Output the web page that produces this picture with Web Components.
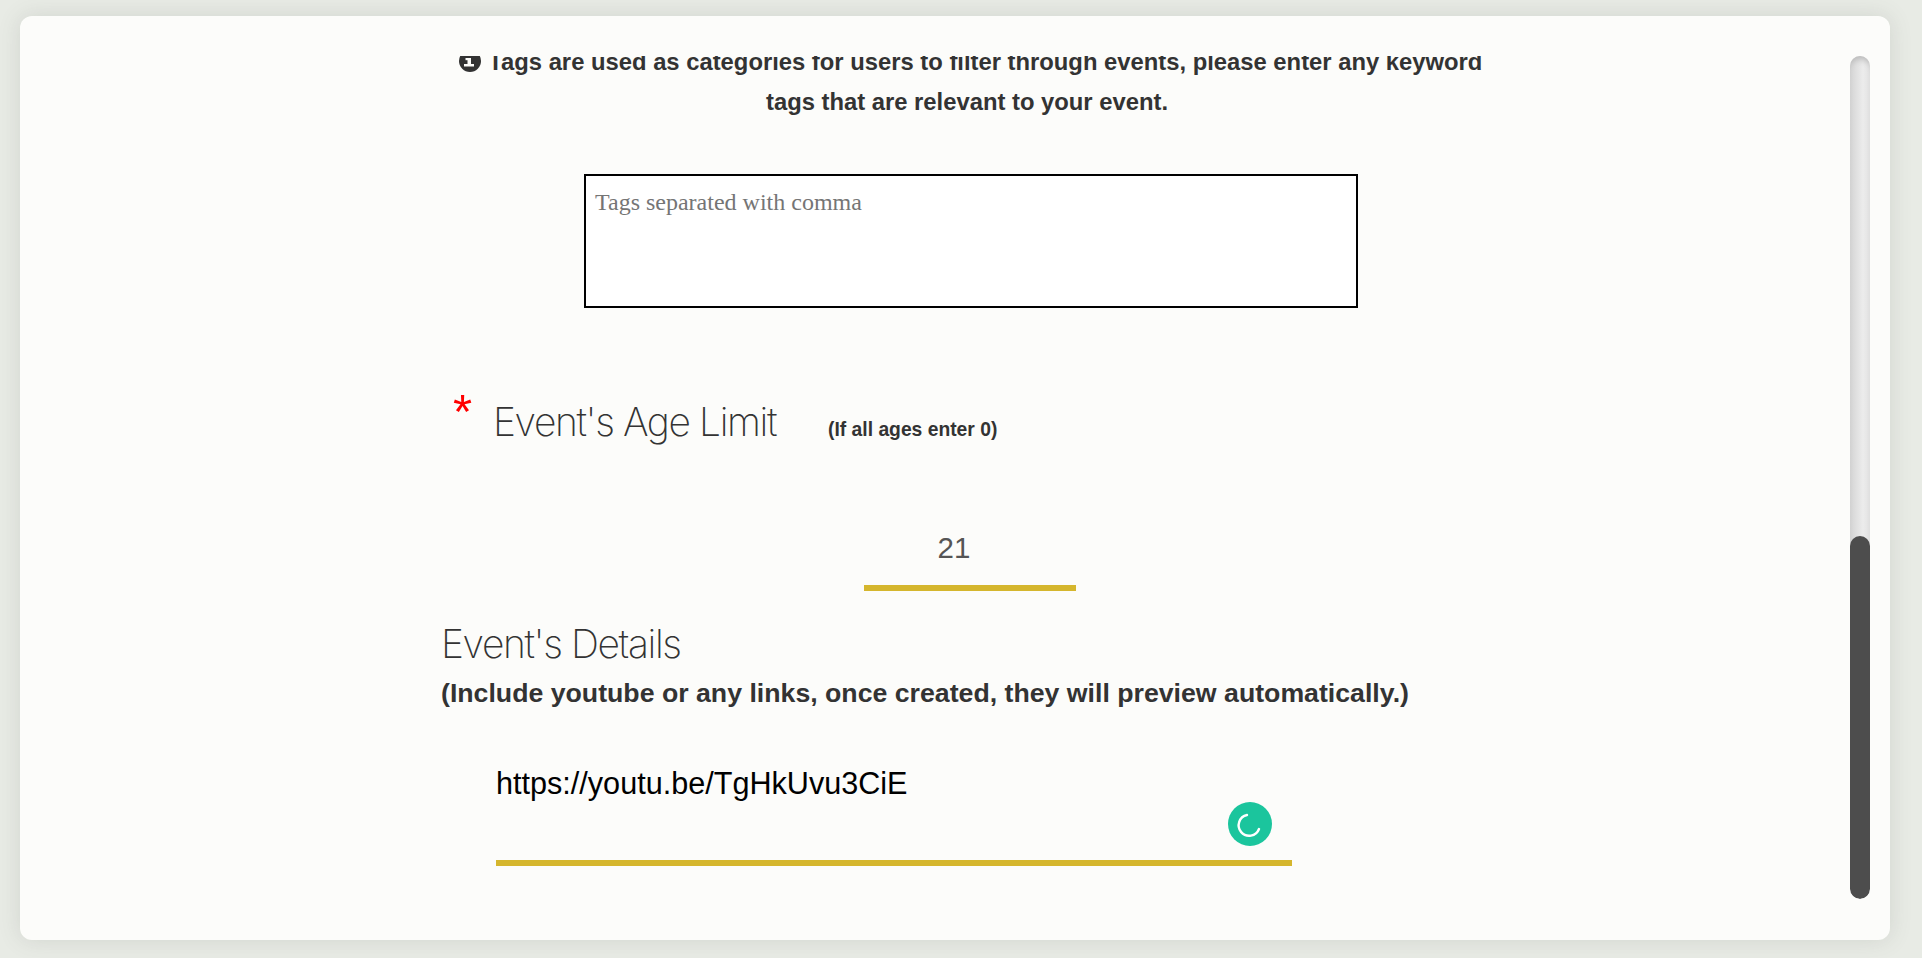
<!DOCTYPE html>
<html>
<head>
<meta charset="utf-8">
<title>Event form</title>
<style>
  html, body { margin: 0; height: 100%; }
  body { background: #e8ebe5; font-family: "Liberation Sans", Arial, sans-serif; color: #333; }
</style>
</head>
<body>
<form-page>
  <tag-note>
    Tags are used as categories for users to filter through events, please enter any keyword<br>
    tags that are relevant to your event.
  </tag-note>
  <tag-box placeholder="Tags separated with comma"></tag-box>
  <field-label hint="(If all ages enter 0)">Event's Age Limit</field-label>
  <age-input>21</age-input>
  <details-field title-text="Event's Details" hint="(Include youtube or any links, once created, they will preview automatically.)">https://youtu.be/TgHkUvu3CiE</details-field>
</form-page>

<script>
class FormPage extends HTMLElement {
    constructor(){
        super();
        this.attachShadow({ mode: "open" });
        this.shadowRoot.innerHTML = `
            <style>
                :host {
                    display: block;
                    box-sizing: border-box;
                    height: 958px;
                    padding: 16px 32px 18px 20px;
                }
                .card {
                    display: flex;
                    height: 100%;
                    background: #fcfcfa;
                    border-radius: 12px;
                    box-shadow: 0 0 22px rgba(90, 95, 85, .16);
                }
                .content {
                    flex: 1;
                    min-width: 0;
                    margin-top: 40px;
                    overflow: hidden;
                }
                .bar {
                    flex: none;
                    position: relative;
                    width: 20px;
                    margin: 40px 20px 41px 0;
                    border-radius: 10px;
                    background: linear-gradient(90deg, #d4d4d4, #ececec 65%, #e2e2e2);
                    box-shadow: inset 0 7px 6px -4px #b8b8b8;
                    overflow: hidden;
                }
                .thumb {
                    position: absolute;
                    left: 0;
                    right: 0;
                    bottom: 0;
                    height: 363px;
                    border-radius: 10px;
                    background: #4d4d4d;
                }
            </style>
            <div class="card">
                <div class="content"><slot></slot></div>
                <div class="bar"><div class="thumb"></div></div>
            </div>
        `;
    }
}

class TagNote extends HTMLElement {
    constructor(){
        super();
        this.attachShadow({ mode: "open" });
        this.shadowRoot.innerHTML = `
            <style>
                :host {
                    display: block;
                    margin-top: -14px;
                    padding-left: 64px;
                    font-size: 23.8px;
                    font-weight: 700;
                    line-height: 40px;
                    text-align: center;
                    color: #333;
                }
                svg { vertical-align: -2px; margin: 0 .5px 0 7.5px; }
            </style>
            <svg width="22" height="22" viewBox="0 0 22 22">
                <circle cx="11" cy="11" r="11" fill="#333"/>
                <rect x="5" y="14" width="10" height="2.5" fill="#fcfcfa"/>
                <rect x="8.5" y="8" width="3.5" height="7" fill="#fcfcfa"/>
                <rect x="6.5" y="8" width="4" height="2.2" fill="#fcfcfa"/>
            </svg><slot></slot>
        `;
    }
}

class TagBox extends HTMLElement {
    constructor(){
        super();
        this.attachShadow({ mode: "open" });
        this.shadowRoot.innerHTML = `
            <style>
                :host {
                    display: block;
                    box-sizing: border-box;
                    width: 774px;
                    height: 134px;
                    margin: 52px 0 0 564px;
                    padding: 13px 9px;
                    background: #fff;
                    border: 2px solid #000;
                    font-family: "Liberation Serif", "Times New Roman", serif;
                    font-size: 24px;
                    line-height: 26px;
                    color: #757575;
                }
            </style>
            <span></span>
        `;
        this.shadowRoot.querySelector("span").textContent = this.getAttribute("placeholder");
    }
}

class FieldLabel extends HTMLElement {
    constructor(){
        super();
        this.attachShadow({ mode: "open" });
        this.shadowRoot.innerHTML = `
            <style>
                :host {
                    display: flex;
                    align-items: baseline;
                    margin: 91px 0 0 433px;
                }
                .star {
                    width: 40px;
                    color: #f00;
                    font-size: 49px;
                    line-height: 40px;
                    position: relative;
                    top: -8px;
                }
                .title {
                    font-family: Inter, sans-serif;
                    font-weight: 200;
                    font-size: 39px;
                    line-height: 44px;
                    letter-spacing: -1.4px;
                    color: #333;
                }
                .hint {
                    margin-left: 52px;
                    font-size: 19.3px;
                    font-weight: 700;
                    color: #333;
                }
            </style>
            <span class="star">*</span>
            <span class="title"><slot></slot></span>
            <span class="hint"></span>
        `;
        this.shadowRoot.querySelector(".hint").textContent = this.getAttribute("hint");
    }
}

class AgeInput extends HTMLElement {
    constructor(){
        super();
        this.attachShadow({ mode: "open" });
        this.shadowRoot.innerHTML = `
            <style>
                :host {
                    display: block;
                    box-sizing: border-box;
                    width: 212px;
                    margin: 85px 0 0 844px;
                    padding-right: 32px;
                    border-bottom: 6px solid #d5b62d;
                    font-size: 29.5px;
                    line-height: 38px;
                    padding-bottom: 18px;
                    text-align: center;
                    color: #555;
                }
            </style>
            <slot></slot>
        `;
    }
}

class DetailsField extends HTMLElement {
    constructor(){
        super();
        this.attachShadow({ mode: "open" });
        this.shadowRoot.innerHTML = `
            <style>
                :host {
                    display: block;
                    margin: 31px 0 0 421px;
                }
                .title {
                    font-family: Inter, sans-serif;
                    font-weight: 200;
                    font-size: 39px;
                    line-height: 44px;
                    letter-spacing: -1.4px;
                    color: #333;
                }
                .hint {
                    margin-top: 9px;
                    font-size: 26.7px;
                    font-weight: 700;
                    line-height: 36px;
                    color: #333;
                }
                .value {
                    position: relative;
                    box-sizing: border-box;
                    width: 796px;
                    height: 116px;
                    margin: 39px 0 0 55px;
                    border-bottom: 6px solid #d5b62d;
                    font-size: 30.6px;
                    line-height: 40px;
                    padding-top: 13px;
                    color: #000;
                }
                .badge {
                    position: absolute;
                    right: 20px;
                    bottom: 14px;
                    width: 44px;
                    height: 44px;
                }
            </style>
            <div class="title"></div>
            <div class="hint"></div>
            <div class="value">
                <slot></slot>
                <svg class="badge" viewBox="0 0 44 44">
                    <circle cx="22" cy="22" r="22" fill="#1bc59d"/>
                    <path d="M19 13 A10.5 10.5 0 1 0 31 27" fill="none" stroke="#fff" stroke-width="2.4" stroke-linecap="round"/>
                </svg>
            </div>
        `;
        this.shadowRoot.querySelector(".title").textContent = this.getAttribute("title-text");
        this.shadowRoot.querySelector(".hint").textContent = this.getAttribute("hint");
    }
}

customElements.define("form-page", FormPage);
customElements.define("tag-note", TagNote);
customElements.define("tag-box", TagBox);
customElements.define("field-label", FieldLabel);
customElements.define("age-input", AgeInput);
customElements.define("details-field", DetailsField);
</script>
</body>
</html>
